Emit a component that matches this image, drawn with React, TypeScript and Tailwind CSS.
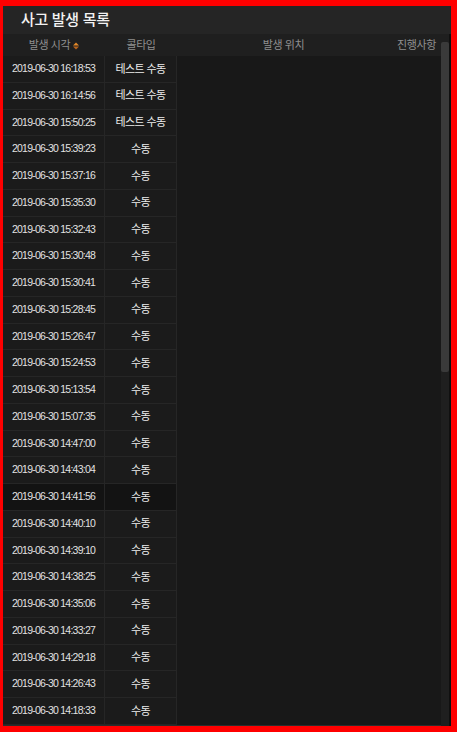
const ROWS: [string, string][] = [
  ['2019-06-30 16:18:53', '테스트 수동'],
  ['2019-06-30 16:14:56', '테스트 수동'],
  ['2019-06-30 15:50:25', '테스트 수동'],
  ['2019-06-30 15:39:23', '수동'],
  ['2019-06-30 15:37:16', '수동'],
  ['2019-06-30 15:35:30', '수동'],
  ['2019-06-30 15:32:43', '수동'],
  ['2019-06-30 15:30:48', '수동'],
  ['2019-06-30 15:30:41', '수동'],
  ['2019-06-30 15:28:45', '수동'],
  ['2019-06-30 15:26:47', '수동'],
  ['2019-06-30 15:24:53', '수동'],
  ['2019-06-30 15:13:54', '수동'],
  ['2019-06-30 15:07:35', '수동'],
  ['2019-06-30 14:47:00', '수동'],
  ['2019-06-30 14:43:04', '수동'],
  ['2019-06-30 14:41:56', '수동'],
  ['2019-06-30 14:40:10', '수동'],
  ['2019-06-30 14:39:10', '수동'],
  ['2019-06-30 14:38:25', '수동'],
  ['2019-06-30 14:35:06', '수동'],
  ['2019-06-30 14:33:27', '수동'],
  ['2019-06-30 14:29:18', '수동'],
  ['2019-06-30 14:26:43', '수동'],
  ['2019-06-30 14:18:33', '수동'],
]

const FONT = "font-['Liberation_Sans','Noto_Sans_CJK_KR',sans-serif]"

export default function App() {
  return (
    <div className={`w-[457px] h-[732px] bg-[#ff0000] pt-[6px] pl-[3px] pr-[6px] pb-[6px] ${FONT}`}>
      <div className="h-full bg-[#181818] flex flex-col overflow-hidden">
        <div className="h-[28px] shrink-0 bg-[#252525] flex items-center pl-[18px]">
          <span className="text-[15px] text-[#f2f2f2] font-medium tracking-[-0.3px]">사고 발생 목록</span>
        </div>
        <div className="flex-1 flex min-h-0">
          <div className="flex-1 flex flex-col min-w-0">
            <div className="h-[22px] shrink-0 bg-[#1f1f1f] flex items-center pt-[1px] text-[11px] text-[#8f8f8f] tracking-[-0.4px]">
              <div className="w-[102px] flex items-center justify-center gap-[3px]">
                발생 시각
                <svg width="6" height="8" viewBox="0 0 6 8">
                  <path d="M0 3.4L3 0.4L6 3.4Z" fill="#e58a2a" />
                  <path d="M0 4.6L3 7.6L6 4.6Z" fill="#b8641c" />
                </svg>
              </div>
              <div className="w-[72px] text-center">콜타입</div>
              <div className="flex-1 text-center">발생 위치</div>
              <div className="w-[51px] text-right pr-[5px]">진행사항</div>
            </div>
            <div className="flex-1 flex flex-col border-b border-[#2c2c2c]">
              {ROWS.map(([t, type]) => {
                const hl = t.endsWith('14:41:56')
                return (
                  <div key={t} className="h-[26.75px] shrink-0 flex">
                    <div
                      className={`w-[102px] flex items-center justify-center border-b border-r border-[#262626] text-[10.5px] text-[#e2e2e2] tracking-[-0.75px] ${hl ? 'bg-[#131313]' : 'bg-[#1b1b1b]'}`}
                    >
                      {t}
                    </div>
                    <div
                      className={`w-[72px] flex items-center justify-center border-b border-r border-[#262626] text-[11px] text-[#ededed] tracking-[-0.6px] ${hl ? 'bg-[#131313]' : 'bg-[#1b1b1b]'}`}
                    >
                      {type}
                    </div>
                    <div className="flex-1" />
                  </div>
                )
              })}
            </div>
          </div>
          <div className="w-[10px] shrink-0 flex">
            <div className="w-[8px] bg-[#1f1f1f] pt-[8px]">
              <div className="h-[330px] bg-[#3a3a3a] rounded-[2px]" />
            </div>
            <div className="w-[2px] bg-[#101010]" />
          </div>
        </div>
      </div>
    </div>
  )
}
